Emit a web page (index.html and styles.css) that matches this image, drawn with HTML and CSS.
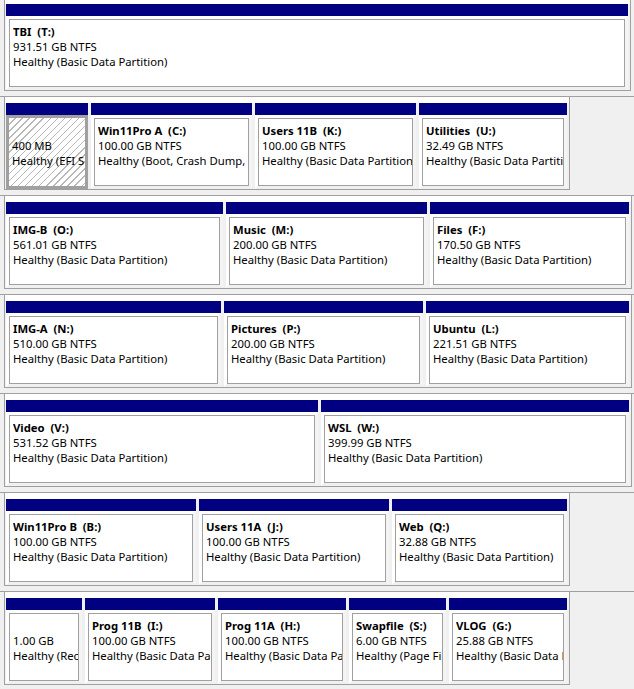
FILE: index.html
```html
<!DOCTYPE html>
<html lang="en">
<head>
    <meta charset="UTF-8">
    <meta name="viewport" content="width=device-width, initial-scale=1.0">
    <title>Disk Management</title>
    <link rel="stylesheet" href="styles.css">
</head>
<body>

<div class="disks">

    <!-- Disco TBI -->
    <div class="row">
        <div class="disk">
            <div class="part w622">
                <div class="bar"></div>
                <div class="body"><div class="panel">
                    <b>TBI  (T:)</b><span>931.51 GB NTFS</span><span>Healthy (Basic Data Partition)</span>
                </div></div>
            </div>
        </div>
    </div>

    <!-- Disco do sistema A -->
    <div class="row">
        <div class="disk">
            <div class="part w82">
                <div class="bar"></div>
                <div class="body selected"><div class="panel">
                    <b>&nbsp;</b><span>400 MB</span><span>Healthy (EFI System Partition)</span>
                </div></div>
            </div>
            <div class="part w161">
                <div class="bar"></div>
                <div class="body"><div class="panel">
                    <b>Win11Pro A  (C:)</b><span>100.00 GB NTFS</span><span>Healthy (Boot, Crash Dump, Basic Data Partition)</span>
                </div></div>
            </div>
            <div class="part w161">
                <div class="bar"></div>
                <div class="body"><div class="panel">
                    <b>Users 11B  (K:)</b><span>100.00 GB NTFS</span><span>Healthy (Basic Data Partition)</span>
                </div></div>
            </div>
            <div class="part w148">
                <div class="bar"></div>
                <div class="body"><div class="panel">
                    <b>Utilities  (U:)</b><span>32.49 GB NTFS</span><span>Healthy (Basic Data Partition)</span>
                </div></div>
            </div>
        </div>
    </div>

    <div class="row">
        <div class="disk">
            <div class="part w217">
                <div class="bar"></div>
                <div class="body"><div class="panel">
                    <b>IMG-B  (O:)</b><span>561.01 GB NTFS</span><span>Healthy (Basic Data Partition)</span>
                </div></div>
            </div>
            <div class="part w201">
                <div class="bar"></div>
                <div class="body"><div class="panel">
                    <b>Music  (M:)</b><span>200.00 GB NTFS</span><span>Healthy (Basic Data Partition)</span>
                </div></div>
            </div>
            <div class="part w199">
                <div class="bar"></div>
                <div class="body"><div class="panel">
                    <b>Files  (F:)</b><span>170.50 GB NTFS</span><span>Healthy (Basic Data Partition)</span>
                </div></div>
            </div>
        </div>
    </div>

    <div class="row">
        <div class="disk">
            <div class="part w215">
                <div class="bar"></div>
                <div class="body"><div class="panel">
                    <b>IMG-A  (N:)</b><span>510.00 GB NTFS</span><span>Healthy (Basic Data Partition)</span>
                </div></div>
            </div>
            <div class="part w199">
                <div class="bar"></div>
                <div class="body"><div class="panel">
                    <b>Pictures  (P:)</b><span>200.00 GB NTFS</span><span>Healthy (Basic Data Partition)</span>
                </div></div>
            </div>
            <div class="part w203">
                <div class="bar"></div>
                <div class="body"><div class="panel">
                    <b>Ubuntu  (L:)</b><span>221.51 GB NTFS</span><span>Healthy (Basic Data Partition)</span>
                </div></div>
            </div>
        </div>
    </div>

    <div class="row">
        <div class="disk">
            <div class="part w312">
                <div class="bar"></div>
                <div class="body"><div class="panel">
                    <b>Video  (V:)</b><span>531.52 GB NTFS</span><span>Healthy (Basic Data Partition)</span>
                </div></div>
            </div>
            <div class="part w308">
                <div class="bar"></div>
                <div class="body"><div class="panel">
                    <b>WSL  (W:)</b><span>399.99 GB NTFS</span><span>Healthy (Basic Data Partition)</span>
                </div></div>
            </div>
        </div>
    </div>

    <!-- Disco do sistema B -->
    <div class="row">
        <div class="disk">
            <div class="part w190">
                <div class="bar"></div>
                <div class="body"><div class="panel">
                    <b>Win11Pro B  (B:)</b><span>100.00 GB NTFS</span><span>Healthy (Basic Data Partition)</span>
                </div></div>
            </div>
            <div class="part w190">
                <div class="bar"></div>
                <div class="body"><div class="panel">
                    <b>Users 11A  (J:)</b><span>100.00 GB NTFS</span><span>Healthy (Basic Data Partition)</span>
                </div></div>
            </div>
            <div class="part w175">
                <div class="bar"></div>
                <div class="body"><div class="panel">
                    <b>Web  (Q:)</b><span>32.88 GB NTFS</span><span>Healthy (Basic Data Partition)</span>
                </div></div>
            </div>
        </div>
    </div>

    <div class="row">
        <div class="disk">
            <div class="part w76">
                <div class="bar"></div>
                <div class="body"><div class="panel">
                    <b>&nbsp;</b><span>1.00 GB</span><span>Healthy (Recovery Partition)</span>
                </div></div>
            </div>
            <div class="part w130">
                <div class="bar"></div>
                <div class="body"><div class="panel">
                    <b>Prog 11B  (I:)</b><span>100.00 GB NTFS</span><span>Healthy (Basic Data Partition)</span>
                </div></div>
            </div>
            <div class="part w128">
                <div class="bar"></div>
                <div class="body"><div class="panel">
                    <b>Prog 11A  (H:)</b><span>100.00 GB NTFS</span><span>Healthy (Basic Data Partition)</span>
                </div></div>
            </div>
            <div class="part w97">
                <div class="bar"></div>
                <div class="body"><div class="panel">
                    <b>Swapfile  (S:)</b><span>6.00 GB NTFS</span><span>Healthy (Page File, Basic Data Partition)</span>
                </div></div>
            </div>
            <div class="part w118">
                <div class="bar"></div>
                <div class="body"><div class="panel">
                    <b>VLOG  (G:)</b><span>25.88 GB NTFS</span><span>Healthy (Basic Data Partition)</span>
                </div></div>
            </div>
        </div>
    </div>

</div>

</body>
</html>
```

FILE: styles.css
```css
body {
    margin: 0;
    padding: 0;
    background-color: #f0f0f0;
    font-family: "Noto Sans", Arial, sans-serif;
    font-size: 11.3px;
    color: #000;
    overflow: hidden;
}
.disks {
    margin-top: -3px;
}
.row {
    border-top: 1px solid #a0a0a0;
    margin-bottom: 5px;
}
.disk {
    display: flex;
    gap: 3px;
    width: fit-content;
    margin-left: 4px;
    padding: 6px 2px 0 1px;
    border: 1px solid #a0a0a0;
    border-top: none;
    background: linear-gradient(#fff 0 6px, #f0f0f0 6px);
}
.part {
    flex: none;
    display: flex;
    flex-direction: column;
}
.bar {
    height: 12px;
    background-color: #000080;
}
.body {
    border: 3px solid #fff;
    border-bottom-color: #f0f0f0;
    border-right-color: #f4f4f4;
    background-color: #fff;
}
.body.selected {
    border-color: #a0a0a0;
    background: repeating-linear-gradient(135deg, #fff 0 4px, #b8b8b8 4px 5px);
}
.panel {
    height: 62px;
    padding: 4px 0 0 3px;
    border: 1px solid #a0a0a0;
    overflow: hidden;
    white-space: nowrap;
    line-height: 15px;
}
.body.selected .panel {
    border-color: transparent;
    padding-left: 2px;
}
.panel b,
.panel span {
    display: block;
    height: 15px;
    white-space: pre;
    overflow: hidden;
}
.w622 { width: 622px; }
.w312 { width: 312px; }
.w308 { width: 308px; }
.w217 { width: 217px; }
.w215 { width: 215px; }
.w203 { width: 203px; }
.w201 { width: 201px; }
.w199 { width: 199px; }
.w190 { width: 190px; }
.w175 { width: 175px; }
.w161 { width: 161px; }
.w148 { width: 148px; }
.w130 { width: 130px; }
.w128 { width: 128px; }
.w118 { width: 118px; }
.w97 { width: 97px; }
.w82 { width: 82px; }
.w76 { width: 76px; }
```
